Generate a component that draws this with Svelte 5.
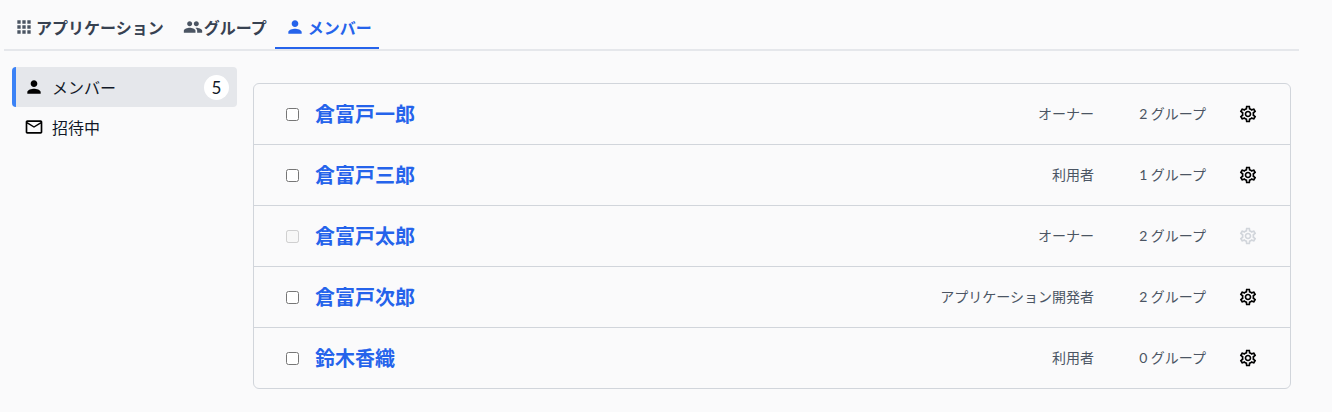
<script>
  const tabs = [
    { label: 'アプリケーション', icon: 'apps' },
    { label: 'グループ', icon: 'group' },
    { label: 'メンバー', icon: 'person', active: true }
  ];

  const members = [
    { name: '倉富戸一郎', role: 'オーナー', groups: 2 },
    { name: '倉富戸三郎', role: '利用者', groups: 1 },
    { name: '倉富戸太郎', role: 'オーナー', groups: 2, disabled: true },
    { name: '倉富戸次郎', role: 'アプリケーション開発者', groups: 2 },
    { name: '鈴木香織', role: '利用者', groups: 0 }
  ];

  const paths = {
    apps: 'M4 8h4V4H4v4zm6 12h4v-4h-4v4zm-6 0h4v-4H4v4zm0-6h4v-4H4v4zm6 0h4v-4h-4v4zm6-10v4h4V4h-4zm-6 4h4V4h-4v4zm6 6h4v-4h-4v4zm0 6h4v-4h-4v4z',
    group: 'M16 11c1.66 0 2.99-1.34 2.99-3S17.66 5 16 5s-3 1.34-3 3 1.34 3 3 3zm-8 0c1.66 0 2.99-1.34 2.99-3S9.66 5 8 5 5 6.34 5 8s1.34 3 3 3zm0 2c-2.33 0-7 1.17-7 3.5V19h14v-2.5c0-2.33-4.67-3.5-7-3.5zm8 0c-.29 0-.62.02-.97.05 1.16.84 1.97 1.97 1.97 3.45V19h6v-2.5c0-2.33-4.67-3.5-7-3.5z',
    person: 'M12 12c2.21 0 4-1.79 4-4s-1.79-4-4-4-4 1.79-4 4 1.79 4 4 4zm0 2c-2.67 0-8 1.34-8 4v2h16v-2c0-2.66-5.33-4-8-4z',
    mail: 'M22 6c0-1.1-.9-2-2-2H4c-1.1 0-2 .9-2 2v12c0 1.1.9 2 2 2h16c1.1 0 2-.9 2-2V6zm-2 0l-8 5-8-5h16zm0 12H4V8l8 5 8-5v10z',
    gear: 'M19.43 12.98c.04-.32.07-.64.07-.98s-.03-.66-.07-.98l2.11-1.65c.19-.15.24-.42.12-.64l-2-3.46c-.12-.22-.39-.3-.61-.22l-2.49 1c-.52-.4-1.08-.73-1.69-.98l-.38-2.65C14.46 2.18 14.25 2 14 2h-4c-.25 0-.46.18-.49.42l-.38 2.65c-.61.25-1.17.59-1.69.98l-2.49-1c-.23-.09-.49 0-.61.22l-2 3.46c-.13.22-.07.49.12.64l2.11 1.65c-.04.32-.07.65-.07.98s.03.66.07.98l-2.11 1.65c-.19.15-.24.42-.12.64l2 3.46c.12.22.39.3.61.22l2.49-1c.52.4 1.08.73 1.69.98l.38 2.65c.03.24.24.42.49.42h4c.25 0 .46-.18.49-.42l.38-2.65c.61-.25 1.17-.59 1.69-.98l2.49 1c.23.09.49 0 .61-.22l2-3.46c.12-.22.07-.49-.12-.64l-2.11-1.65zM17.45 11.27c.04.31.05.52.05.73 0 .21-.02.43-.05.73l-.14 1.13.89.7 1.08.84-.7 1.21-1.27-.51-1.04-.42-.9.68c-.43.32-.84.56-1.25.73l-1.06.43-.16 1.13-.2 1.35h-1.4l-.19-1.35-.16-1.13-1.06-.43c-.43-.18-.83-.41-1.23-.71l-.91-.7-1.06.43-1.27.51-.7-1.21 1.08-.84.89-.7-.14-1.13c-.03-.31-.05-.54-.05-.74s.02-.43.05-.73l.14-1.13-.89-.7-1.08-.84.7-1.21 1.27.51 1.04.42.9-.68c.43-.32.84-.56 1.25-.73l1.06-.43.16-1.13.2-1.35h1.39l.19 1.35.16 1.13 1.06.43c.43.18.83.41 1.23.71l.91.7 1.06-.43 1.27-.51.7 1.21-1.07.85-.89.7.14 1.13zM12 8c-2.21 0-4 1.79-4 4s1.79 4 4 4 4-1.79 4-4-1.79-4-4-4zm0 6c-1.1 0-2-.9-2-2s.9-2 2-2 2 .9 2 2-.9 2-2 2z'
  };
</script>

<div class="page">
  <nav class="tabs">
    {#each tabs as tab}
      <div class="tab" class:active={tab.active}>
        <svg viewBox="0 0 24 24" width="20" height="20"><path d={paths[tab.icon]} /></svg>
        <span>{tab.label}</span>
      </div>
    {/each}
  </nav>

  <div class="content">
    <aside class="side">
      <div class="side-item current">
        <svg viewBox="0 0 24 24" width="20" height="20"><path d={paths.person} /></svg>
        <span class="side-label">メンバー</span>
        <span class="count">5</span>
      </div>
      <div class="side-item">
        <svg viewBox="0 0 24 24" width="20" height="20"><path d={paths.mail} /></svg>
        <span class="side-label">招待中</span>
      </div>
    </aside>

    <ul class="list">
      {#each members as m}
        <li class="row">
          <input type="checkbox" disabled={m.disabled} />
          <span class="name">{m.name}</span>
          <span class="role">{m.role}</span>
          <span class="groups">{m.groups} グループ</span>
          <svg class="gear" class:off={m.disabled} viewBox="0 0 24 24" width="20" height="20"><path d={paths.gear} /></svg>
        </li>
      {/each}
    </ul>
  </div>
</div>

<style>
  :global(body) {
    background: #fafafb;
    font-family: Lato, "Noto Sans CJK JP", sans-serif;
  }

  .page {
    height: 412px;
    padding: 0 33px 0 4px;
    box-sizing: border-box;
    overflow: hidden;
  }

  .tabs {
    display: flex;
    padding-left: 8px;
    border-bottom: 2px solid #e5e7eb;
  }

  .tab {
    display: flex;
    align-items: center;
    gap: 2px;
    height: 49px;
    padding: 7px 10px 0 2px;
    border-bottom: 2px solid transparent;
    box-sizing: border-box;
    font-size: 16px;
    font-weight: 700;
    color: #374151;
  }

  .tab:nth-child(2) {
    gap: 1px;
    padding-left: 9px;
    padding-right: 8px;
  }

  .tab:nth-child(3) {
    gap: 3px;
    padding-left: 10px;
    padding-right: 7px;
  }

  .tab svg {
    fill: #4b5563;
  }

  .tab.active {
    color: #2563eb;
    border-bottom-color: #2563eb;
  }

  .tab.active svg {
    fill: #2563eb;
  }

  .content {
    display: flex;
    align-items: flex-start;
    padding: 16px 8px 0 8px;
    gap: 16px;
  }

  .side {
    width: 225px;
    flex-shrink: 0;
  }

  .side-item {
    display: flex;
    align-items: center;
    height: 40px;
    padding: 0 8px 0 12px;
    gap: 8px;
    font-size: 16px;
    color: #111827;
    border-radius: 4px;
    box-sizing: border-box;
  }

  .side-item svg {
    fill: #000;
  }

  .side-item.current {
    background: #e5e7eb;
    border-left: 4px solid #3b82f6;
    padding-left: 8px;
  }

  .side-label {
    flex: 1;
  }

  .count {
    width: 25px;
    height: 25px;
    border-radius: 50%;
    background: #fff;
    display: flex;
    align-items: center;
    justify-content: center;
    font-size: 17px;
  }

  .list {
    flex: 1;
    list-style: none;
    margin: 16px 0 0;
    padding: 0;
    border: 1px solid #d1d5db;
    border-radius: 6px;
  }

  .row {
    display: flex;
    align-items: center;
    height: 60px;
    padding: 0 32px 0 32px;
    border-bottom: 1px solid #d1d5db;
    font-size: 14px;
    color: #4b5563;
  }

  .row:last-child {
    height: 60px;
    border-bottom: 0;
  }

  .row input {
    width: 13px;
    height: 13px;
    margin: 0 16px 0 0;
  }

  .name {
    flex: 1;
    margin-bottom: 2px;
    font-size: 20px;
    font-weight: 700;
    color: #2563eb;
  }

  .role {
    margin-bottom: 2px;
  }

  .groups {
    width: 68px;
    margin-left: 44px;
    margin-bottom: 2px;
    text-align: right;
  }

  .gear {
    margin-left: 32px;
    fill: #000;
  }

  .gear.off {
    fill: #d1d5db;
  }
</style>
